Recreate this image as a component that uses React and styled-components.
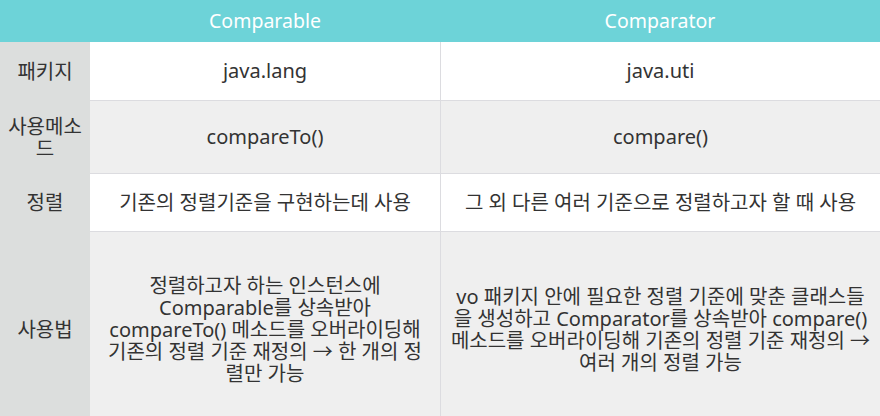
import React from "react";
import styled, { createGlobalStyle } from "styled-components";

const GlobalStyle = createGlobalStyle`
  html, body {
    margin: 0;
    padding: 0;
    background: #ffffff;
  }
  body {
    font-family: "Noto Sans", "Noto Sans CJK KR", sans-serif;
  }
`;

const rows = [
  {
    label: "패키지",
    left: "java.lang",
    right: "java.uti",
  },
  {
    label: "사용메소드",
    left: "compareTo()",
    right: "compare()",
    shade: true,
  },
  {
    label: "정렬",
    left: "기존의 정렬기준을 구현하는데 사용",
    right: "그 외 다른 여러 기준으로 정렬하고자 할 때 사용",
  },
  {
    label: "사용법",
    left:
      "정렬하고자 하는 인스턴스에 Comparable를 상속받아 compareTo() 메소드를 오버라이딩해 기존의 정렬 기준 재정의 → 한 개의 정렬만 가능",
    right:
      "vo 패키지 안에 필요한 정렬 기준에 맞춘 클래스들을 생성하고 Comparator를 상속받아 compare() 메소드를 오버라이딩해 기존의 정렬 기준 재정의 → 여러 개의 정렬 가능",
    shade: true,
    last: true,
  },
];

function App() {
  return (
    <>
      <GlobalStyle />
      <Viewport>
        <Table>
          <HeaderCell />
          <HeaderCell>Comparable</HeaderCell>
          <HeaderCell>Comparator</HeaderCell>
          {rows.map((row) => (
            <React.Fragment key={row.label}>
              <LabelCell>{row.label}</LabelCell>
              <DataCell $shade={row.shade} $last={row.last}>
                {row.left}
              </DataCell>
              <DataCell $shade={row.shade} $last={row.last} $divider>
                {row.right}
              </DataCell>
            </React.Fragment>
          ))}
        </Table>
      </Viewport>
    </>
  );
}

export default App;

// the table runs on below the visible area, so the last row is cut off
const Viewport = styled.div`
  width: 880px;
  height: 416px;
  overflow: hidden;
`;

const Table = styled.div`
  display: grid;
  grid-template-columns: 90px 350px 440px;
  grid-template-rows: 42px 59px 73px 58px 196px;
  width: 880px;
  font-size: 20px;
  line-height: 22px;
  color: #333333;
`;

const Cell = styled.div`
  box-sizing: border-box;
  display: flex;
  align-items: center;
  justify-content: center;
  text-align: center;
`;

const HeaderCell = styled(Cell)`
  background: #6dd3d8;
  color: #ffffff;
  font-size: 19.5px;
`;

const LabelCell = styled(Cell)`
  background: #dcdedd;
  padding: 0 8px;
`;

const DataCell = styled(Cell)`
  background: ${(p) => (p.$shade ? "#efefef" : "#ffffff")};
  border-bottom: ${(p) => (p.$last ? "none" : "1px solid #dcdce0")};
  border-left: ${(p) => (p.$divider ? "1px solid #dcdce0" : "none")};
  padding: 0 ${(p) => (p.$divider ? "9px" : "12px")};
`;
